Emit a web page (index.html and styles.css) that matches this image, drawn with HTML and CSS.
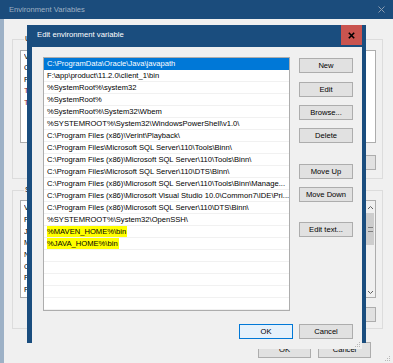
FILE: index.html
```html
<!DOCTYPE html>
<html>
<head>
<meta charset="utf-8">
<title>Edit environment variable</title>
<link rel="stylesheet" href="styles.css">
</head>
<body>
<div class="bgwin">
  <div class="bg-title">
    <span class="bg-title-text">Environment Variables</span>
    <svg class="bg-close" width="7" height="7" viewBox="0 0 7 7"><path d="M0.5 0.5L6.5 6.5M6.5 0.5L0.5 6.5" stroke="#8a9bb0" stroke-width="1"/></svg>
  </div>
  <div class="bg-frame">
    <div class="bg-edge"></div>
    <div class="bg-body">
      <fieldset class="group group-user">
        <legend>User variables for Admin</legend>
        <div class="lv lv-user">
          <div class="lv-head"><span class="c1">Variable</span><span class="c2">Value</span></div>
          <div class="lv-row"><span class="c1">ChocolateyLastPathUpdate</span><span class="c2">132069581519470519</span></div>
          <div class="lv-row"><span class="c1">Path</span><span class="c2">C:\Users\Admin\AppData\Local\Microsoft</span></div>
          <div class="lv-row red"><span class="c1">TEMP</span><span class="c2">%USERPROFILE%\AppData\Local\Temp</span></div>
          <div class="lv-row red"><span class="c1">TMP</span><span class="c2">%USERPROFILE%\AppData\Local\Temp</span></div>
        </div>
        <div class="btnrow">
          <div class="btn">New...</div>
          <div class="btn">Edit...</div>
          <div class="btn">Delete</div>
        </div>
      </fieldset>
      <fieldset class="group group-sys">
        <legend>System variables</legend>
        <div class="lv lv-sys">
          <div class="lv-main">
            <div class="lv-head"><span class="c1">Variable</span><span class="c2">Value</span></div>
            <div class="lv-row"><span class="c1">FP_NO_HOST_CHECK</span><span class="c2">NO</span></div>
            <div class="lv-row"><span class="c1">JAVA_HOME</span><span class="c2">C:\Program Files\Java\jdk1.8.0_201</span></div>
            <div class="lv-row"><span class="c1">MAVEN_HOME</span><span class="c2">C:\apache-maven-3.6.0</span></div>
            <div class="lv-row"><span class="c1">NUMBER_OF_PROCESSORS</span><span class="c2">4</span></div>
            <div class="lv-row"><span class="c1">OS</span><span class="c2">Windows_NT</span></div>
            <div class="lv-row"><span class="c1">Path</span><span class="c2">C:\ProgramData\Oracle\Java\javapath</span></div>
            <div class="lv-row"><span class="c1">PATHEXT</span><span class="c2">.COM;.EXE;.BAT;.CMD;.VBS;.VBE;.JS</span></div>
          </div>
          <div class="sbar">
            <svg class="sb-arrow" width="7" height="5" viewBox="0 0 7 5"><path d="M1 4L3.5 1.5L6 4" fill="none" stroke="#606060" stroke-width="1"/></svg>
            <div class="sb-track">
              <div class="sb-thumb"><span class="grip"></span></div>
            </div>
            <svg class="sb-arrow" width="7" height="5" viewBox="0 0 7 5"><path d="M1 1L3.5 3.5L6 1" fill="none" stroke="#606060" stroke-width="1"/></svg>
          </div>
        </div>
        <div class="btnrow btnrow-sys">
          <div class="btn">New...</div>
          <div class="btn">Edit...</div>
          <div class="btn">Delete</div>
        </div>
      </fieldset>
      <div class="bg-footer">
        <div class="btn">OK</div>
        <div class="btn">Cancel</div>
      </div>
    </div>
  </div>
  <svg class="grip-dots bg-grip" width="6" height="6" viewBox="0 0 6 6"><rect x="4" y="0" width="1" height="1" fill="#b8b8b8"/><rect x="2" y="2" width="1" height="1" fill="#b8b8b8"/><rect x="4" y="2" width="1" height="1" fill="#b8b8b8"/><rect x="0" y="4" width="1" height="1" fill="#b8b8b8"/><rect x="2" y="4" width="1" height="1" fill="#b8b8b8"/><rect x="4" y="4" width="1" height="1" fill="#b8b8b8"/></svg>
</div>

<div class="dialog">
  <div class="dlg-title">
    <span class="dlg-title-text">Edit environment variable</span>
    <div class="dlg-close">
      <svg width="7" height="7" viewBox="0 0 7 7"><path d="M0.8 0.8L6.2 6.2M6.2 0.8L0.8 6.2" stroke="#000" stroke-width="1.6"/></svg>
    </div>
  </div>
  <div class="dlg-body">
    <div class="plist">
      <div class="prow sel">C:\ProgramData\Oracle\Java\javapath</div>
      <div class="prow">F:\app\product\11.2.0\client_1\bin</div>
      <div class="prow">%SystemRoot%\system32</div>
      <div class="prow">%SystemRoot%</div>
      <div class="prow">%SystemRoot%\System32\Wbem</div>
      <div class="prow">%SYSTEMROOT%\System32\WindowsPowerShell\v1.0\</div>
      <div class="prow">C:\Program Files (x86)\Verint\Playback\</div>
      <div class="prow">C:\Program Files\Microsoft SQL Server\110\Tools\Binn\</div>
      <div class="prow">C:\Program Files (x86)\Microsoft SQL Server\110\Tools\Binn\</div>
      <div class="prow">C:\Program Files\Microsoft SQL Server\110\DTS\Binn\</div>
      <div class="prow">C:\Program Files (x86)\Microsoft SQL Server\110\Tools\Binn\Manage...</div>
      <div class="prow">C:\Program Files (x86)\Microsoft Visual Studio 10.0\Common7\IDE\Pri...</div>
      <div class="prow">C:\Program Files (x86)\Microsoft SQL Server\110\DTS\Binn\</div>
      <div class="prow">%SYSTEMROOT%\System32\OpenSSH\</div>
      <div class="prow"><span class="hl">%MAVEN_HOME%\bin</span></div>
      <div class="prow"><span class="hl">%JAVA_HOME%\bin</span></div>
      <div class="prow"></div>
      <div class="prow"></div>
      <div class="prow"></div>
      <div class="prow"></div>
      <div class="prow"></div>
    </div>
    <div class="sidebtns">
      <div class="btn">New</div>
      <div class="btn">Edit</div>
      <div class="btn">Browse...</div>
      <div class="btn">Delete</div>
      <div class="btn gap-a">Move Up</div>
      <div class="btn">Move Down</div>
      <div class="btn gap-b">Edit text...</div>
    </div>
    <div class="dlg-footer">
      <div class="btn btn-default">OK</div>
      <div class="btn">Cancel</div>
    </div>
    <svg class="grip-dots dlg-grip" width="6" height="6" viewBox="0 0 6 6"><rect x="4" y="0" width="1" height="1" fill="#b8b8b8"/><rect x="2" y="2" width="1" height="1" fill="#b8b8b8"/><rect x="4" y="2" width="1" height="1" fill="#b8b8b8"/><rect x="0" y="4" width="1" height="1" fill="#b8b8b8"/><rect x="2" y="4" width="1" height="1" fill="#b8b8b8"/><rect x="4" y="4" width="1" height="1" fill="#b8b8b8"/></svg>
  </div>
</div>
</body>
</html>
```

FILE: styles.css
```css
* { box-sizing: border-box; }

html, body {
  margin: 0;
  padding: 0;
}

body {
  width: 393px;
  height: 363px;
  overflow: hidden;
  position: relative;
  background: #f0f0f0;
  font-family: "Liberation Sans", Arial, sans-serif;
  font-size: 7.6px;
  color: #000;
}

/* ---------- background window ---------- */
.bgwin {
  position: relative;
  display: flex;
  flex-direction: column;
  width: 393px;
  height: 363px;
  overflow: hidden;
}

.bg-title {
  height: 19px;
  flex: none;
  background: #1b4c7c;
  display: flex;
  align-items: center;
  justify-content: space-between;
  padding: 0 8px 0 9px;
  color: #9fb0c3;
  font-size: 7.6px;
}

.bg-frame {
  flex: 1;
  display: flex;
  min-width: 0;
}

.bg-edge {
  width: 4px;
  flex: none;
  background: #9db1c6;
}

.bg-body {
  flex: 1;
  min-width: 0;
  display: flex;
  flex-direction: column;
  padding: 15px 10px 0 8px;
}

.group {
  margin: 0;
  padding: 0 6px 8px 7px;
  border: 1px solid #dcdcdc;
  min-width: 0;
}

.group legend {
  padding: 0 1px;
  margin-left: 4px;
  line-height: 10px;
  font-size: 7.6px;
}

.group-sys {
  margin-top: 6px;
  padding-bottom: 6px;
}

.lv {
  background: #fff;
  border: 1px solid #adadad;
  overflow: hidden;
  margin-top: 6px;
}

.lv-user { height: 93px; }

.lv-sys {
  height: 98px;
  margin-top: 5px;
  display: flex;
}

.lv-main { flex: 1; min-width: 0; overflow: hidden; }

.lv-head, .lv-row {
  display: flex;
  white-space: nowrap;
  padding-left: 3px;
  height: 11.7px;
  line-height: 11.7px;
}

.lv-head { height: 11px; line-height: 11px; }

.lv-sys .lv-head { height: 13px; line-height: 13px; }

.c1 { width: 120px; flex: none; overflow: hidden; }
.c2 { width: 180px; flex: none; overflow: hidden; }

.lv-row.red { color: #8c1c1c; }

.sbar {
  width: 10px;
  flex: none;
  background: #f0f0f0;
  display: flex;
  flex-direction: column;
  align-items: center;
  padding: 4px 0 2px;
}

.sb-arrow { flex: none; }

.sb-track {
  flex: 1;
  width: 100%;
  padding: 3px 1px 0;
}

.sb-thumb {
  height: 32px;
  background: #cdcdcd;
  display: flex;
  align-items: center;
  justify-content: center;
}

.grip {
  width: 5px;
  height: 5px;
  border-top: 1px solid #7f7f7f;
  border-bottom: 1px solid #7f7f7f;
}

.btnrow {
  display: flex;
  justify-content: flex-end;
  gap: 7px;
  margin-top: 12px;
}

.btnrow-sys { margin-top: 9px; }

.btnrow .btn { width: 53px; }

.bg-footer {
  display: flex;
  justify-content: flex-end;
  gap: 7px;
  margin-top: 13px;
  padding-right: 12px;
}

.bg-footer .btn { width: 53px; height: 16px; line-height: 14px; }

.btn {
  height: 15px;
  background: #e1e1e1;
  border: 1px solid #adadad;
  text-align: center;
  line-height: 13px;
  font-size: 7.6px;
  white-space: nowrap;
  overflow: hidden;
}

.grip-dots { position: absolute; }
.bg-grip { right: 2px; bottom: 1px; }

/* ---------- dialog ---------- */
.dialog {
  position: absolute;
  left: 27px;
  top: 25px;
  width: 339px;
  height: 318px;
  background: #1a4d7e;
  display: flex;
  flex-direction: column;
  padding: 0 4px 4px 5px;
}

.dlg-title {
  height: 22px;
  flex: none;
  display: flex;
  justify-content: space-between;
  align-items: flex-start;
}

.dlg-title-text {
  color: #fff;
  font-size: 7.7px;
  line-height: 20px;
  padding-left: 5px;
}

.dlg-close {
  width: 21px;
  height: 20px;
  background: #c9544f;
  display: flex;
  align-items: center;
  justify-content: center;
}

.dlg-body {
  flex: 1;
  position: relative;
  background: #f0f0f0;
  padding: 10px 9px 10px 11px;
  display: grid;
  grid-template-columns: 1fr 54px;
  grid-template-rows: 1fr auto;
  column-gap: 9px;
  row-gap: 13px;
}

.plist {
  background: #fff;
  border: 1px solid #adadad;
  overflow: hidden;
  min-width: 0;
}

.prow {
  height: 12px;
  line-height: 11px;
  padding-left: 3px;
  border-bottom: 1px solid #f1f1f1;
  white-space: nowrap;
  overflow: hidden;
}

.prow.sel {
  background: #0078d7;
  color: #fff;
  border-bottom-color: #0078d7;
}

.hl {
  display: inline-block;
  background: #ffff00;
  height: 11px;
  padding: 0 1px 0 0;
}

.sidebtns {
  display: flex;
  flex-direction: column;
  gap: 8px;
  padding-top: 1px;
}

.sidebtns .btn:nth-child(2) { margin-top: 1px; }

.sidebtns .gap-a { margin-top: 13px; }
.sidebtns .gap-b { margin-top: 12px; }

.dlg-footer {
  grid-column: 1 / -1;
  display: flex;
  justify-content: flex-end;
  gap: 6px;
}

.dlg-footer .btn { width: 54px; }

.btn-default {
  border-color: #0078d7;
  background: #e5f1fb;
}

.dlg-grip { right: 1px; bottom: 1px; }
```
